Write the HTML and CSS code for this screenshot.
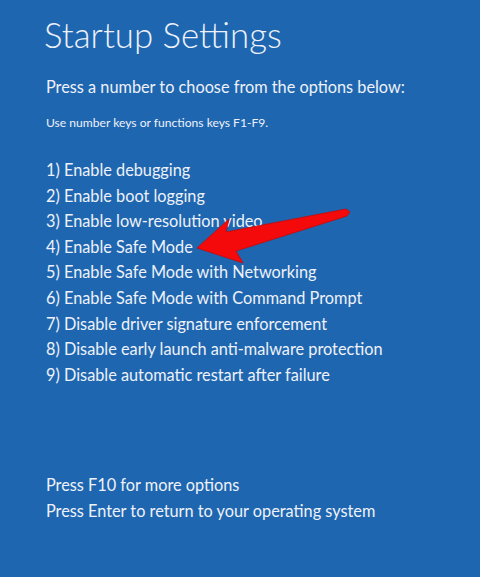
FILE: index.html
```html
<!DOCTYPE html>
<html>
<head>
<meta charset="utf-8">
<link rel="stylesheet" href="styles.css">
</head>
<body>
<main class="screen">
  <h1 class="title">Startup Settings</h1>
  <p class="lead">Press a number to choose from the options below:</p>
  <p class="hint">Use number keys or functions keys F1-F9.</p>
  <ol class="options">
    <li>1) Enable debugging</li>
    <li>2) Enable boot logging</li>
    <li>3) Enable low-resolution video</li>
    <li>4) Enable Safe Mode</li>
    <li>5) Enable Safe Mode with Networking</li>
    <li>6) Enable Safe Mode with Command Prompt</li>
    <li>7) Disable driver signature enforcement</li>
    <li>8) Disable early launch anti-malware protection</li>
    <li>9) Disable automatic restart after failure</li>
  </ol>
  <div class="footer">
    <p>Press F10 for more options</p>
    <p>Press Enter to return to your operating system</p>
  </div>
  <svg class="arrow" width="480" height="577" viewBox="0 0 480 577">
    <polygon points="197,248 229,219 226,232 346,209 350,212 347,216 236,251 243,263" fill="#f40a0a" stroke="#c80808" stroke-width="0.8" stroke-linejoin="round"/>
  </svg>
</main>
</body>
</html>
```
FILE: styles.css
```css
html, body {
  margin: 0;
  padding: 0;
  background: #1f66b1;
}
.screen {
  position: relative;
  width: 480px;
  height: 577px;
  box-sizing: border-box;
  padding: 11px 0 0 44px;
  background: #1f66b1;
  color: #eef2f8;
  font-family: Lato, "Open Sans", sans-serif;
  overflow: hidden;
}
.title {
  margin: 0;
  font-weight: 300;
  font-size: 34.8px;
  line-height: 48px;
}
.lead {
  margin: 17px 0 0 2px;
  font-size: 16.3px;
  line-height: 22px;
}
.hint {
  margin: 17px 0 0 2px;
  font-size: 12.1px;
  line-height: 16px;
}
.options {
  list-style: none;
  margin: 26px 0 0 2px;
  padding: 0;
  font-size: 16.3px;
  line-height: 25.6px;
}
.footer {
  margin: 85px 0 0 2px;
  font-size: 16.3px;
  line-height: 26px;
}
.footer p {
  margin: 0;
}
.arrow {
  position: absolute;
  left: 0;
  top: 0;
  pointer-events: none;
}
```
